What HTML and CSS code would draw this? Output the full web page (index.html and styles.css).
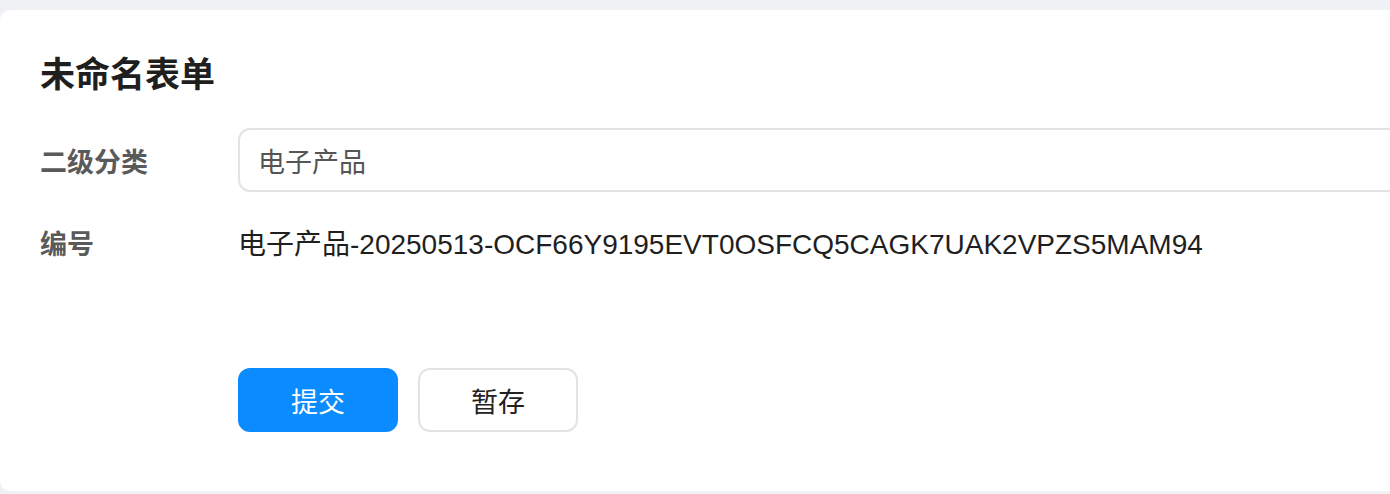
FILE: index.html
```html
<!DOCTYPE html>
<html lang="zh-CN">
<head>
  <meta charset="UTF-8" />
  <meta name="viewport" content="width=device-width, initial-scale=1.0"/>
  <title>未命名表单</title>
  <link rel="stylesheet" href="styles.css">
</head>
<body>
  <div class="page">
    <section class="card">
      <h1 class="title">未命名表单</h1>

      <form class="form" onsubmit="return false;">
        <div class="row">
          <label class="label" for="category">二级分类</label>
          <input class="input" id="category" type="text" value="电子产品" />
        </div>

        <div class="row row-text">
          <span class="label">编号</span>
          <span class="value">电子产品-20250513-OCF66Y9195EVT0OSFCQ5CAGK7UAK2VPZS5MAM94</span>
        </div>

        <div class="actions">
          <button class="btn btn-primary" type="submit">提交</button>
          <button class="btn" type="button">暂存</button>
        </div>
      </form>
    </section>
  </div>
</body>
</html>
```

FILE: styles.css
```css
body {
  margin: 0;
  background: #f0f1f4;
  font-family: "Liberation Sans", "Noto Sans CJK SC", sans-serif;
  color: #222;
  overflow: hidden;
}
.page {
  padding-top: 10px;
  height: 494px;
  box-sizing: border-box;
}
.card {
  width: 1460px;
  height: 481px;
  box-sizing: border-box;
  background: #fff;
  border-radius: 10px 0 0 10px;
  padding: 37px 40px 0;
}
.title {
  margin: 0;
  font-family: "Noto Sans CJK SC", sans-serif;
  font-size: 35px;
  font-weight: 600;
  line-height: 50px;
  color: #1f1f1f;
}
.form {
  margin-top: 31px;
}
.row {
  display: flex;
  align-items: center;
}
.label {
  width: 198px;
  flex-shrink: 0;
  font-family: "Noto Sans CJK SC", sans-serif;
  font-size: 27px;
  font-weight: 600;
  color: #5a5a5a;
}
.input {
  flex: 1;
  height: 64px;
  box-sizing: border-box;
  border: 2px solid #e3e3e3;
  border-radius: 12px;
  padding: 0 18px;
  font-family: "Noto Sans CJK SC", sans-serif;
  font-size: 27px;
  color: #555;
  outline: none;
}
.row-text {
  margin-top: 22px;
  height: 56px;
}
.value {
  font-size: 28px;
  color: #1f1f1f;
}
.actions {
  display: flex;
  gap: 20px;
  margin-top: 98px;
  margin-left: 198px;
}
.btn {
  width: 160px;
  height: 64px;
  box-sizing: border-box;
  border: 2px solid #e3e3e3;
  border-radius: 12px;
  background: #fff;
  font-family: "Noto Sans CJK SC", sans-serif;
  font-size: 27px;
  color: #222;
  cursor: pointer;
}
.btn-primary {
  background: #0a8bff;
  border-color: #0a8bff;
  color: #fff;
}
```
